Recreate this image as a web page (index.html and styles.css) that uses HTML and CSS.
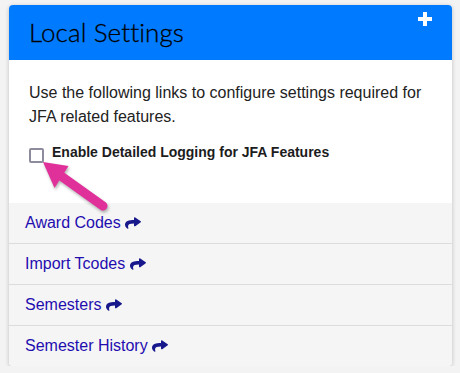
FILE: index.html
```html
<!DOCTYPE html>
<html>
<head>
<meta charset="utf-8">
<link rel="stylesheet" href="styles.css">
</head>
<body>
<div class="card">
  <div class="card-header">
    <h1 class="title">Local Settings</h1>
    <span class="plus"><svg width="14" height="14" viewBox="0 0 14 14"><rect x="5" y="0" width="4" height="14" fill="#fff"/><rect x="0" y="5" width="14" height="4" fill="#fff"/></svg></span>
  </div>
  <div class="card-body">
    <p class="intro">Use the following links to configure settings required for JFA related features.</p>
    <label class="check-row"><span class="checkbox"></span><span class="check-label">Enable Detailed Logging for JFA Features</span></label>
  </div>
  <ul class="links">
    <li class="link-item"><a class="link" href="#">Award Codes <svg class="share" viewBox="0 20 512 470" preserveAspectRatio="none"><path d="M503.691 189.836L327.687 37.851C312.281 24.546 288 35.347 288 56.015v80.053C127.371 137.907 0 170.1 0 322.326c0 61.441 39.581 122.309 83.333 154.132 13.653 9.931 33.111-2.533 28.077-18.631C66.066 312.814 132.917 274.316 288 272.085V360c0 20.7 24.3 31.453 39.687 18.164l176.004-152c11.071-9.562 11.086-26.753 0-36.328z"/></svg></a></li>
    <li class="link-item"><a class="link" href="#">Import Tcodes <svg class="share" viewBox="0 20 512 470" preserveAspectRatio="none"><path d="M503.691 189.836L327.687 37.851C312.281 24.546 288 35.347 288 56.015v80.053C127.371 137.907 0 170.1 0 322.326c0 61.441 39.581 122.309 83.333 154.132 13.653 9.931 33.111-2.533 28.077-18.631C66.066 312.814 132.917 274.316 288 272.085V360c0 20.7 24.3 31.453 39.687 18.164l176.004-152c11.071-9.562 11.086-26.753 0-36.328z"/></svg></a></li>
    <li class="link-item"><a class="link" href="#">Semesters <svg class="share" viewBox="0 20 512 470" preserveAspectRatio="none"><path d="M503.691 189.836L327.687 37.851C312.281 24.546 288 35.347 288 56.015v80.053C127.371 137.907 0 170.1 0 322.326c0 61.441 39.581 122.309 83.333 154.132 13.653 9.931 33.111-2.533 28.077-18.631C66.066 312.814 132.917 274.316 288 272.085V360c0 20.7 24.3 31.453 39.687 18.164l176.004-152c11.071-9.562 11.086-26.753 0-36.328z"/></svg></a></li>
    <li class="link-item"><a class="link" href="#">Semester History <svg class="share" viewBox="0 20 512 470" preserveAspectRatio="none"><path d="M503.691 189.836L327.687 37.851C312.281 24.546 288 35.347 288 56.015v80.053C127.371 137.907 0 170.1 0 322.326c0 61.441 39.581 122.309 83.333 154.132 13.653 9.931 33.111-2.533 28.077-18.631C66.066 312.814 132.917 274.316 288 272.085V360c0 20.7 24.3 31.453 39.687 18.164l176.004-152c11.071-9.562 11.086-26.753 0-36.328z"/></svg></a></li>
  </ul>
  <svg class="pointer" width="90" height="72" viewBox="30 150 90 72">
    <g fill="#e0309a">
      <line x1="61" y1="176" x2="103" y2="206" stroke="#e0309a" stroke-width="9" stroke-linecap="round"/>
      <polygon points="43,162 68.5,166 54.5,188"/>
    </g>
  </svg>
</div>
</body>
</html>
```

FILE: styles.css
```css
html, body {
  margin: 0;
  padding: 0;
}
body {
  background: #f3f3f3;
  font-family: "Liberation Sans", Arial, sans-serif;
  padding: 5px 8px 0 9px;
}
.card {
  position: relative;
  width: 443px;
  background: #fff;
  border-radius: 4px;
  box-shadow: 0 1px 4px rgba(0, 0, 0, 0.22);
  overflow: visible;
}
.card-header {
  position: relative;
  background: #007bff;
  border-radius: 4px 4px 0 0;
  padding: 12px 20px;
  height: 31px;
}
.title {
  margin: 0;
  font-family: Lato, "Open Sans", sans-serif;
  font-weight: 300;
  font-size: 26px;
  line-height: 31px;
  color: #000;
  letter-spacing: 0.1px;
  -webkit-text-stroke: 0.3px #000;
}
.plus {
  position: absolute;
  right: 20px;
  top: 7px;
  width: 14px;
  height: 14px;
  display: block;
}
.plus svg { display: block; }
.card-body {
  padding: 21px 20px 41px 20px;
}
.intro {
  margin: 0 0 13px 0;
  font-size: 16px;
  line-height: 24px;
  color: #222;
}
.check-row {
  display: flex;
  align-items: flex-start;
  height: 20px;
}
.checkbox {
  display: block;
  width: 11px;
  height: 11px;
  border: 2px solid #8c8c9c;
  border-radius: 2px;
  background: #fff;
  margin-top: 6px;
  margin-right: 8px;
}
.check-label {
  font-weight: bold;
  font-size: 14px;
  line-height: 20px;
  color: #1c1c1c;
}
.links {
  list-style: none;
  margin: 0;
  padding: 0;
  background: #f5f5f5;
  border-radius: 0 0 4px 4px;
}
.link-item {
  padding: 8px 15px 8px 16px;
  font-size: 16px;
  line-height: 24px;
  border-bottom: 1px solid #dcdcdc;
}
.link-item:last-child {
  border-bottom: none;
}
.link {
  color: #1f0db0;
  text-decoration: none;
}
.share {
  width: 16px;
  height: 12px;
  fill: #17188c;
  vertical-align: -1px;
}
.pointer {
  position: absolute;
  left: 21px;
  top: 145px;
  filter: drop-shadow(1px 2px 1.5px rgba(0, 0, 0, 0.3));
}
```
